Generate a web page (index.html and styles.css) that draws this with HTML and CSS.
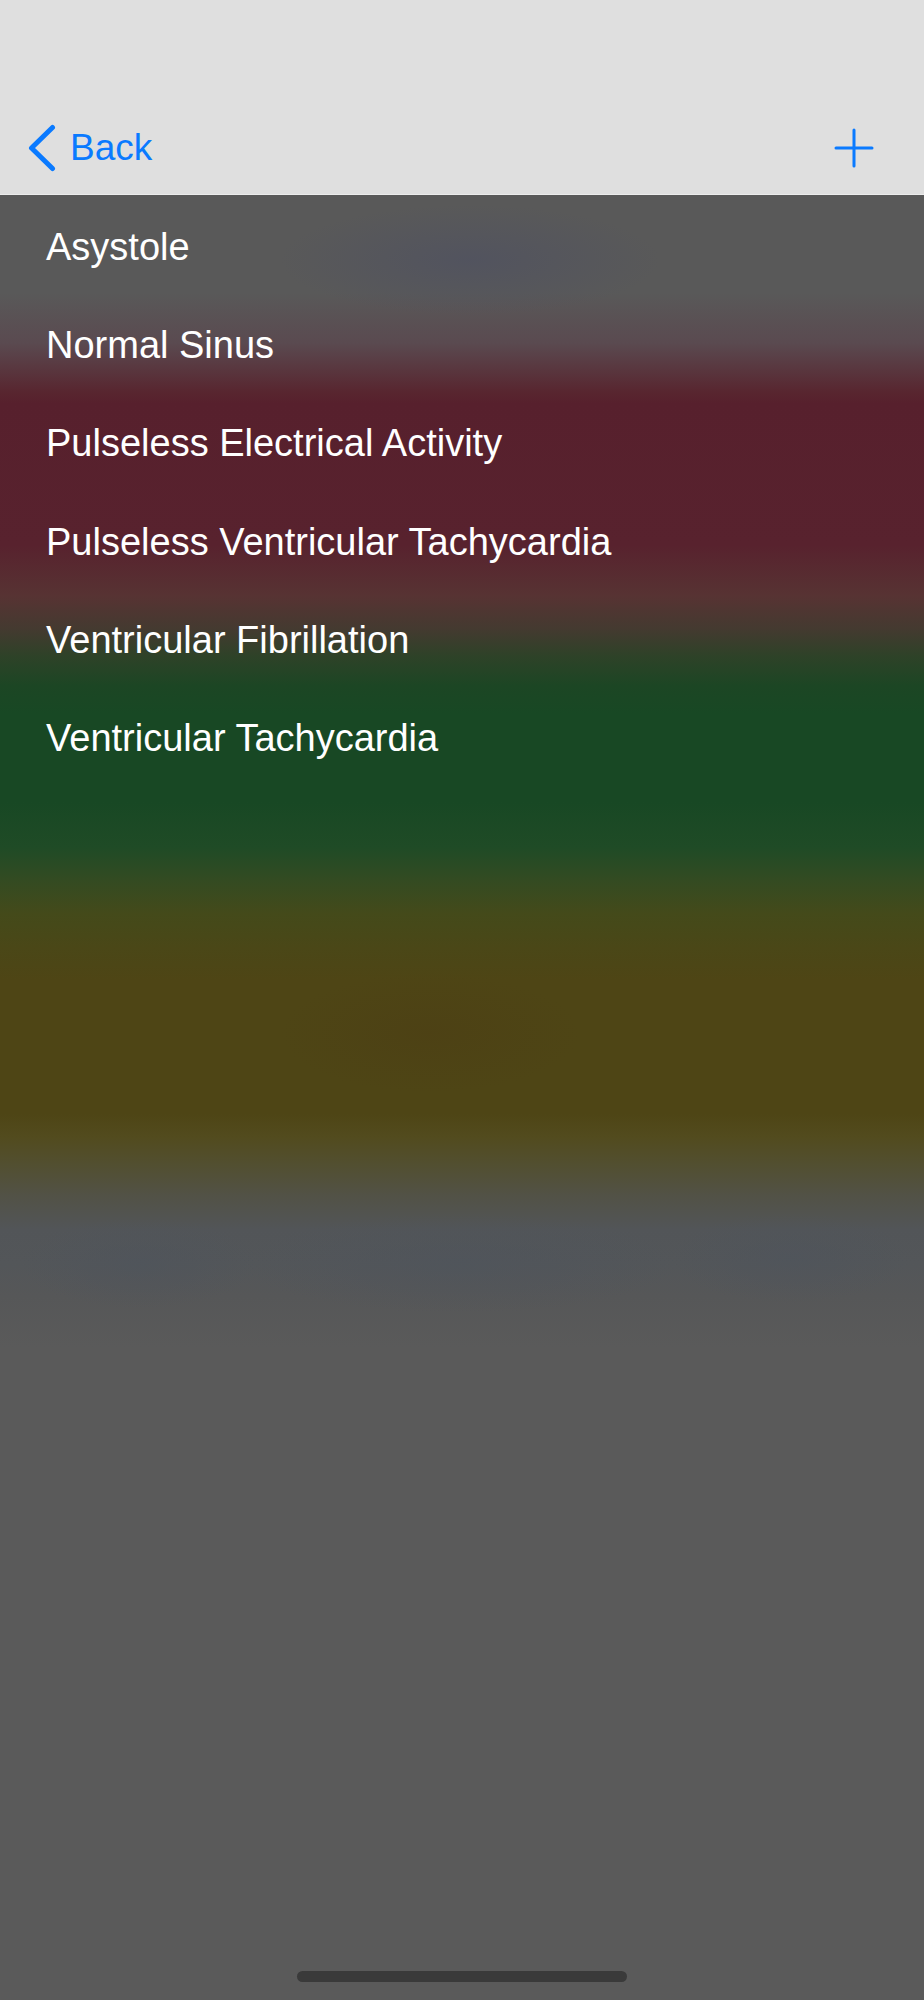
FILE: index.html
```html
<!DOCTYPE html>
<html lang="en">
<head>
<meta charset="utf-8">
<title>Rhythms</title>
<link rel="stylesheet" href="styles.css">
</head>
<body>
<div class="screen">
  <header class="header">
    <nav class="nav">
      <a class="back" href="#">
        <svg class="chevron" width="30" height="50" viewBox="0 0 30 50" aria-hidden="true">
          <path d="M26.5 4.5 L5.5 25 L26.5 45.5" fill="none" stroke="#0a7aff" stroke-width="5" stroke-linecap="round" stroke-linejoin="round"/>
        </svg>
        <span class="back-label">Back</span>
      </a>
      <svg class="plus" width="40" height="40" viewBox="0 0 40 40" aria-hidden="true">
        <path d="M20 2 V38 M2 20 H38" fill="none" stroke="#0a7aff" stroke-width="3" stroke-linecap="round"/>
      </svg>
    </nav>
  </header>
  <main class="content">
    <ul class="list">
      <li class="row">Asystole</li>
      <li class="row">Normal Sinus</li>
      <li class="row">Pulseless Electrical Activity</li>
      <li class="row">Pulseless Ventricular Tachycardia</li>
      <li class="row">Ventricular Fibrillation</li>
      <li class="row">Ventricular Tachycardia</li>
    </ul>
    <div class="home-indicator"></div>
  </main>
</div>
</body>
</html>
```
FILE: styles.css
```css
html, body {
  margin: 0;
  padding: 0;
}
body {
  background: #5a5a5a;
  font-family: "Liberation Sans", Arial, sans-serif;
}
.screen {
  width: 924px;
  height: 2000px;
  display: flex;
  flex-direction: column;
  overflow: hidden;
}
.header {
  height: 195px;
  box-sizing: border-box;
  padding-top: 118px;
  background: #dfdfdf;
  border-bottom: 1px solid #ececec;
  flex: none;
}
.nav {
  height: 60px;
  display: flex;
  align-items: center;
  justify-content: space-between;
  padding: 0 50px 0 26px;
}
.back {
  display: flex;
  align-items: center;
  text-decoration: none;
  color: #0a7aff;
}
.chevron {
  display: block;
}
.back-label {
  margin-left: 14px;
  font-size: 37px;
}
.plus {
  display: block;
}
.content {
  flex: 1;
  display: flex;
  flex-direction: column;
  background:
    radial-gradient(ellipse 190px 55px at 470px 65px, rgba(80, 82, 96, 0.8), rgba(80, 82, 96, 0)),
    radial-gradient(ellipse 150px 60px at 430px 838px, rgba(76, 62, 20, 0.55), rgba(76, 62, 20, 0)),
    radial-gradient(ellipse 120px 45px at 140px 1068px, rgba(78, 84, 92, 0.6), rgba(78, 84, 92, 0)),
    radial-gradient(ellipse 220px 50px at 460px 1068px, rgba(78, 84, 92, 0.6), rgba(78, 84, 92, 0)),
    radial-gradient(ellipse 120px 45px at 790px 1063px, rgba(78, 84, 92, 0.6), rgba(78, 84, 92, 0)),
    linear-gradient(to bottom,
      #595959 0px,
      #595959 98px,
      #5a4a50 148px,
      #58252f 198px,
      #57202d 208px,
      #58222e 350px,
      #573333 401px,
      #443a30 434px,
      #2e4228 461px,
      #1c4624 491px,
      #184824 518px,
      #184824 607px,
      #1f4b26 652px,
      #334b22 685px,
      #444a1a 719px,
      #4a4717 752px,
      #4e4515 785px,
      #4e4515 919px,
      #524b1e 942px,
      #524f30 969px,
      #525247 1002px,
      #525558 1035px,
      #535659 1069px,
      #565758 1102px,
      #5a5a5a 1152px,
      #5a5a5a 1804px);
}
.list {
  list-style: none;
  margin: 0;
  padding: 3px 0 0 0;
}
.row {
  height: 98.2px;
  line-height: 98.2px;
  padding-left: 46px;
  font-size: 38px;
  color: #ffffff;
  white-space: nowrap;
}
.home-indicator {
  margin: auto auto 18px;
  width: 330px;
  height: 11px;
  border-radius: 6px;
  background: #3a3a3a;
}
```
